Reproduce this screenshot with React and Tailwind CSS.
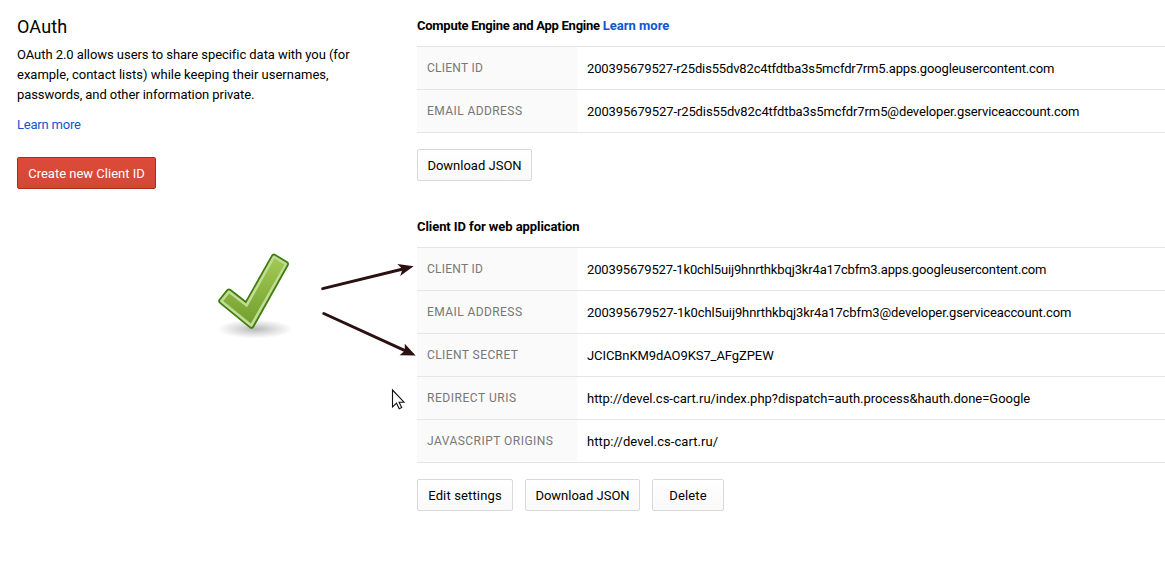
const Row = ({ label, value, labelTracking, valueTracking }) => (
  <div className="flex h-[43px] border-t border-[#e5e5e5] text-[13px] leading-5">
    <div className={`${labelTracking} w-40 shrink-0 bg-[#fafafa] pl-[10px] pt-[11px] text-[12px] text-[#777]`}>{label}</div>
    <div className={`${valueTracking} pl-[10px] pt-[12px] whitespace-nowrap`}>{value}</div>
  </div>
);

const Btn = ({ className, children }) => (
  <button className={`${className} h-8 rounded-[2px] border border-[#d9d9d9] bg-linear-to-b from-white to-[#f9f9f9] pt-0.5 text-[13px] leading-5 whitespace-nowrap`}>{children}</button>
);

const Annotations = () => (
  <svg className="pointer-events-none absolute inset-0" width="1165" height="567" viewBox="0 0 1165 567">
    <defs>
      <linearGradient id="check" x1="0" y1="0" x2="0" y2="1">
        <stop offset="0" stopColor="#a3c956" />
        <stop offset="1" stopColor="#73a02d" />
      </linearGradient>
      <radialGradient id="shadow">
        <stop offset="0" stopColor="#000" stopOpacity=".28" />
        <stop offset=".5" stopColor="#000" stopOpacity=".13" />
        <stop offset="1" stopColor="#000" stopOpacity="0" />
      </radialGradient>
    </defs>
    <ellipse cx="255" cy="329" rx="38" ry="9.5" fill="url(#shadow)" />
    <path d="M274 257 L285.6 264.1 L251.3 325.3 L221.6 301 L229 291.9 L246.6 305.6 Z" fill="#3f7d0c" stroke="#3f7d0c" strokeWidth="6.6" strokeLinejoin="round" />
    <path d="M274 257 L285.6 264.1 L251.3 325.3 L221.6 301 L229 291.9 L246.6 305.6 Z" fill="#c1dc94" stroke="#c1dc94" strokeWidth="3" strokeLinejoin="round" />
    <path d="M274.5 258.2 L284.4 264.4 L250.9 323.6 L223.2 300.9 L229.2 293.5 L247 307.2 Z" fill="url(#check)" />
    <g stroke="#2b1011" strokeWidth="3" strokeLinecap="round">
      <path d="M322.7 288.6 L403 269" />
      <path d="M323.8 313.5 L405 350.6" />
    </g>
    <g fill="#2b1011">
      <path d="M413.6 266.3 L397.4 263.9 L402.5 269.2 L400.2 276 Z" />
      <path d="M415.6 355.5 L404.8 343.8 L404.8 350.8 L399.6 355.2 Z" />
    </g>
    <path d="M392.5 390 V407 L396.5 403.2 L399.2 408.8 L401.7 407.6 L399.1 402.2 H404 Z" fill="white" stroke="#111" strokeWidth="1.1" />
  </svg>
);

export default function App() {
  return (
    <div className="relative flex h-[567px] w-[1165px] overflow-hidden bg-white font-['Roboto','Liberation_Sans',sans-serif] text-[13px] leading-5 text-black">
      <aside className="w-[417px] shrink-0 pl-[17px] pt-[15px]">
        <h1 className="text-[18px] leading-6 tracking-[0.15px]">OAuth</h1>
        <p className="mt-[6px] w-[350px]">
          <span className="tracking-[-0.055px]">OAuth 2.0 allows users to share specific data with you (for</span><br />
          example, contact lists) while keeping their usernames,<br />
          <span className="tracking-[-0.07px]">passwords, and other information private.</span>
        </p>
        <a className="mt-[10px] block tracking-[-0.2px] text-[#1155cc]">Learn more</a>
        <button className="mt-[22px] h-8 w-[139px] rounded-[2px] border border-[#b0281a] bg-linear-to-b from-[#dd4b39] to-[#d14836] pt-0.5 text-white">Create new Client ID</button>
      </aside>
      <main className="grow pt-4">
        <h2 className="font-bold"><span className="tracking-[-0.26px]">Compute Engine and App Engine </span><a className="text-[#1155cc]">Learn more</a></h2>
        <div className="mt-[10px] border-b border-[#e5e5e5]">
          <Row label="CLIENT ID" labelTracking="tracking-[0.25px]" value="200395679527-r25dis55dv82c4tfdtba3s5mcfdr7rm5.apps.googleusercontent.com" valueTracking="tracking-[-0.147px]" />
          <Row label="EMAIL ADDRESS" labelTracking="tracking-[0.42px]" value="200395679527-r25dis55dv82c4tfdtba3s5mcfdr7rm5@developer.gserviceaccount.com" valueTracking="tracking-[-0.105px]" />
        </div>
        <div className="mt-4 flex"><Btn className="w-[115px]">Download JSON</Btn></div>
        <h2 className="mt-9 font-bold tracking-[-0.07px]">Client ID for web application</h2>
        <div className="mt-[10px] border-b border-[#e5e5e5]">
          <Row label="CLIENT ID" labelTracking="tracking-[0.25px]" value="200395679527-1k0chl5uij9hnrthkbqj3kr4a17cbfm3.apps.googleusercontent.com" valueTracking="tracking-[-0.147px]" />
          <Row label="EMAIL ADDRESS" labelTracking="tracking-[0.42px]" value="200395679527-1k0chl5uij9hnrthkbqj3kr4a17cbfm3@developer.gserviceaccount.com" valueTracking="tracking-[-0.105px]" />
          <Row label="CLIENT SECRET" labelTracking="tracking-[0.42px]" value="JCICBnKM9dAO9KS7_AFgZPEW" valueTracking="tracking-[-0.08px]" />
          <Row label="REDIRECT URIS" labelTracking="tracking-[0.54px]" value="http://devel.cs-cart.ru/index.php?dispatch=auth.process&hauth.done=Google" valueTracking="tracking-[-0.03px]" />
          <Row label="JAVASCRIPT ORIGINS" labelTracking="tracking-[0.47px]" value="http://devel.cs-cart.ru/" valueTracking="tracking-[0.07px]" />
        </div>
        <div className="mt-4 flex gap-3">
          <Btn className="w-24 tracking-[0.14px]">Edit settings</Btn>
          <Btn className="w-[115px]">Download JSON</Btn>
          <Btn className="w-[72px] tracking-[0.14px]">Delete</Btn>
        </div>
      </main>
      <Annotations />
    </div>
  );
}
